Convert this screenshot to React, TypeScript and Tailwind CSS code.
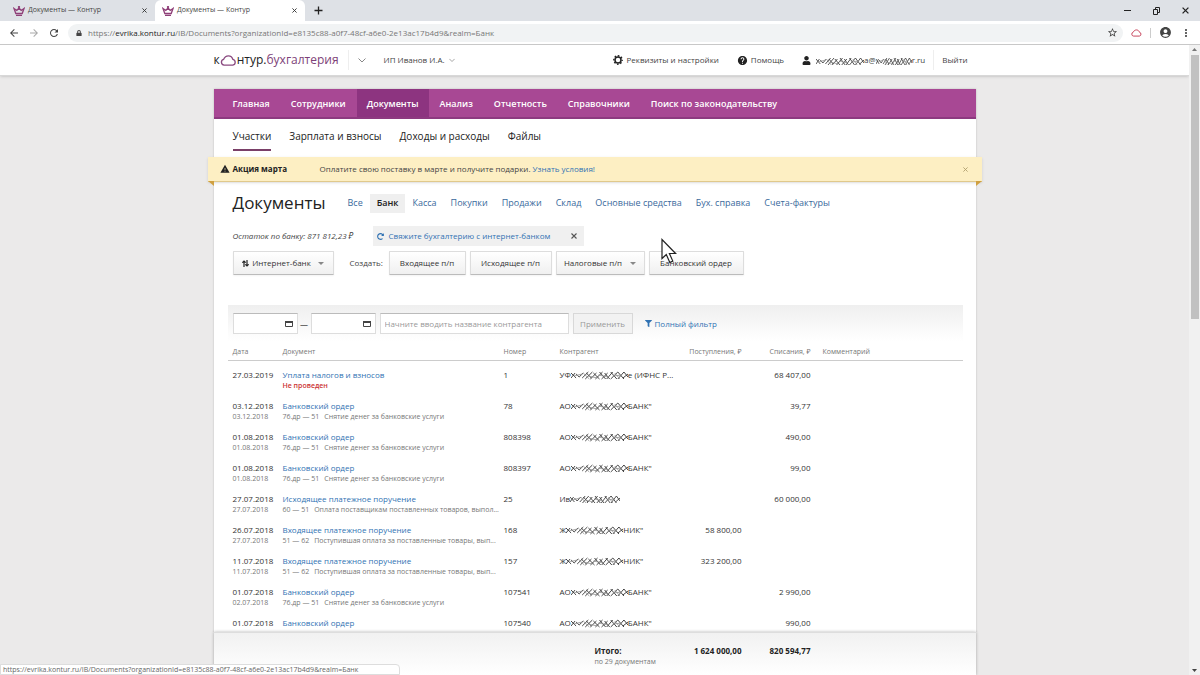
import type { ReactNode } from "react";
import { FaFilter, FaLock, FaRedoAlt, FaUser } from "react-icons/fa";
import {
  MdAccountCircle,
  MdArrowBack,
  MdArrowForward,
  MdHelp,
  MdMoreVert,
  MdRefresh,
  MdStarBorder,
  MdWarning,
} from "react-icons/md";

const PAGE_URL =
  "/IB/Documents?organizationId=e8135c88-a0f7-48cf-a6e0-2e13ac17b4d9&realm=Банк";

const NAV = [
  "Главная",
  "Сотрудники",
  "Документы",
  "Анализ",
  "Отчетность",
  "Справочники",
  "Поиск по законодательству",
];

const SUBNAV = ["Участки", "Зарплата и взносы", "Доходы и расходы", "Файлы"];

const KINDS = [
  "Все",
  "Банк",
  "Касса",
  "Покупки",
  "Продажи",
  "Склад",
  "Основные средства",
  "Бух. справка",
  "Счета-фактуры",
];

type Party = { start: string; end: string; hidden: number };

type Doc = {
  date: string;
  posted?: string;
  title: string;
  accounts?: string;
  note?: string;
  warning?: string;
  number: string;
  party: Party;
  income?: string;
  outcome?: string;
};

const BANK: Party = { start: "АО", end: 'БАНК"', hidden: 57 };
const CLIENT: Party = { start: "Ж", end: 'НИК"', hidden: 57 };
const FEE = { title: "Банковский ордер", accounts: "76.др — 51", note: "Снятие денег за банковские услуги", party: BANK };
const INCOMING = {
  title: "Входящее платежное поручение",
  accounts: "51 — 62",
  note: "Поступившая оплата за поставленные товары, вып...",
  party: CLIENT,
};

const DOCS: Doc[] = [
  {
    date: "27.03.2019",
    title: "Уплата налогов и взносов",
    warning: "Не проведен",
    number: "1",
    party: { start: "УФ", end: "е (ИФНС Р...", hidden: 57 },
    outcome: "68 407,00",
  },
  { ...FEE, date: "03.12.2018", posted: "03.12.2018", number: "78", outcome: "39,77" },
  { ...FEE, date: "01.08.2018", posted: "01.08.2018", number: "808398", outcome: "490,00" },
  { ...FEE, date: "01.08.2018", posted: "01.08.2018", number: "808397", outcome: "99,00" },
  {
    date: "27.07.2018",
    posted: "27.07.2018",
    title: "Исходящее платежное поручение",
    accounts: "60 — 51",
    note: "Оплата поставщикам поставленных товаров, выпол...",
    number: "25",
    party: { start: "Ив", end: "", hidden: 50 },
    outcome: "60 000,00",
  },
  { ...INCOMING, date: "26.07.2018", posted: "27.07.2018", number: "168", income: "58 800,00" },
  { ...INCOMING, date: "11.07.2018", posted: "11.07.2018", number: "157", income: "323 200,00" },
  { ...FEE, date: "01.07.2018", posted: "02.07.2018", number: "107541", outcome: "2 990,00" },
  { date: "01.07.2018", title: "Банковский ордер", party: BANK, number: "107540", outcome: "990,00" },
];

function Scribble({ width }: { width: number }) {
  return (
    <svg width={width} height="11" viewBox="0 -2 56 11" preserveAspectRatio="none" fill="none" stroke="#333" strokeWidth="0.9" className="shrink-0" aria-hidden="true">
      <path d="M0 2l5 5M0 7l4-5M5 3l3 3 4-4M11 7l6-6M14 8l7-7M15 2l5 5M19 8l6-6M22 2l6 6M24 8l7-7M28 1l6 7M30 8l6-6M33 2l5 6M35 8l6-7M39 1l6 7M39 8l7-7M46 1l6 7M46 8l6-7M52 1l4 5M51 7l5-4" />
      <path d="M3 5l8-2M12 2l6 6M17 5l9 2M27 4l10 2M41 5l9-1M43 2l5 6" stroke="#999" />
    </svg>
  );
}

function Crown() {
  return (
    <svg width="12" height="10" viewBox="0 0 12 10" fill="none" stroke="#8f3f78" strokeWidth="1.3" aria-hidden="true">
      <path d="M1 2.500l1.800 5h6.400l1.800-5-2.800 2L6 2 3.800 4.500zM3 9.300h6" />
      <circle cx="6" cy="1" r="0.5" />
    </svg>
  );
}

function Cloud({ width, height, color }: { width: number; height: number; color: string }) {
  return (
    <svg width={width} height={height} viewBox="0 0 15 10" fill="none" stroke={color} strokeWidth="1.2" aria-hidden="true">
      <path d="M3.500 9.200a2.700 2.700 0 0 1-.4-5.300C4 1.700 5.700.8 7.400.8c2 0 3.500 1.200 4 3.100a2.700 2.700 0 0 1 0 5.300z" />
    </svg>
  );
}

function Gear() {
  return (
    <svg width="10" height="10" viewBox="0 0 10 10" fill="none" stroke="#222" aria-hidden="true">
      <circle cx="5" cy="5" r="3" strokeWidth="1.500" />
      <circle cx="5" cy="5" r="4.200" strokeWidth="1.400" strokeDasharray="1.650 1.650" strokeDashoffset="0.800" />
    </svg>
  );
}

function Chevron({ size = 7 }: { size?: number }) {
  return (
    <svg width={size} height={size} viewBox="0 0 8 8" fill="none" stroke="#888" aria-hidden="true">
      <path d="M.5 2.500L4 6l3.500-3.500" />
    </svg>
  );
}

function Caret() {
  return (
    <svg width="6" height="3" viewBox="0 0 6 3" fill="#888" aria-hidden="true">
      <path d="M0 0h6L3 3z" />
    </svg>
  );
}

function Cross({ size, color }: { size: number; color: string }) {
  return (
    <svg width={size} height={size} viewBox="0 0 6 6" stroke={color} strokeWidth="1.1" aria-hidden="true">
      <path d="M.5.5l5 5M5.500.5l-5 5" />
    </svg>
  );
}

function Calendar() {
  return (
    <svg width="8" height="7" viewBox="0 0 8 7" fill="none" stroke="#444" aria-hidden="true">
      <path d="M.5 1.500h7v5h-7z" />
      <path d="M0 2h8" strokeWidth="2" />
    </svg>
  );
}

function BrowserTab({ active = false }: { active?: boolean }) {
  return (
    <div className={`flex h-full w-[150px] items-center pr-2 ${active ? "rounded-t-md bg-white pl-[7px]" : "pl-2"}`}>
      <Crown />
      <span className="ml-[3px] flex-1 text-[7px] text-[#444]">Документы — Контур</span>
      <button aria-label="Закрыть вкладку">
        <Cross size={5} color="#333" />
      </button>
    </div>
  );
}

function BrowserChrome() {
  return (
    <div className="shrink-0">
      <div className="flex h-[21px] items-center bg-[#dee1e6] pl-[5px]">
        <BrowserTab />
        <BrowserTab active />
        <button aria-label="Новая вкладка" className="ml-[9px]">
          <svg width="9" height="9" viewBox="0 0 9 9" stroke="#222" strokeWidth="1.300">
            <path d="M4.500.5v8M.5 4.500h8" />
          </svg>
        </button>
        <div className="mr-[11px] ml-auto flex items-center gap-[22px]">
          <button aria-label="Свернуть">
            <svg width="7" height="7" viewBox="0 0 7 7" stroke="#222"><path d="M0 3.500h7" /></svg>
          </button>
          <button aria-label="Развернуть">
            <svg width="7" height="8" viewBox="0 0 7 8" fill="none" stroke="#222"><path d="M.5 2.500h4v5h-4zM2.500 2.500v-2h4v5h-2" /></svg>
          </button>
          <button aria-label="Закрыть">
            <Cross size={7} color="#222" />
          </button>
        </div>
      </div>
      <div className="flex h-6 items-center border-b border-[#c8c8c8] bg-white px-2 text-[#444]">
        <button aria-label="Назад"><MdArrowBack size={12} /></button>
        <button aria-label="Вперед" className="ml-2 text-[#aaa]"><MdArrowForward size={12} /></button>
        <button aria-label="Обновить" className="ml-2"><MdRefresh size={12} /></button>
        <div className="mr-2 ml-2 flex h-[18px] flex-1 items-center rounded-full bg-[#f1f3f4] pr-[5px] pl-2">
          <FaLock size={6} />
          <span className="ml-[6px] flex-1 text-[8px] text-[#777]">
            https://<span className="text-[#222]">evrika.kontur.ru</span>
            {PAGE_URL}
          </span>
          <MdStarBorder size={11} />
        </div>
        <Cloud width={11} height={8} color="#c0304a" />
        <span className="mx-2 h-[10px] w-px bg-[#ccc]" />
        <MdAccountCircle size={13} />
        <MdMoreVert size={12} className="ml-2" />
      </div>
    </div>
  );
}

function SiteHeader() {
  return (
    <header className="border-b border-[#d8d8d8] bg-white shadow-sm">
      <div className="mx-auto flex h-[30px] max-w-[762px] items-center text-[8px] text-[#444]">
        <a href="#" className="flex items-center text-[12px] text-[#222]">
          к
          <Cloud width={17} height={11} color="#8a4a80" />
          нтур.<span className="text-[#7d3f78]">бухгалтерия</span>
        </a>
        <span className="ml-[9px] h-5 w-px bg-[#eee]" />
        <button aria-label="Сервисы" className="ml-[9px]"><Chevron size={8} /></button>
        <button className="ml-[18px] flex items-center gap-1">
          ИП Иванов И.А. <Chevron size={6} />
        </button>
        <a href="#" className="ml-auto flex items-center gap-1">
          <Gear /> Реквизиты и настройки
        </a>
        <a href="#" className="ml-[18px] flex items-center gap-[3px]">
          <MdHelp size={11} className="text-[#222]" /> Помощь
        </a>
        <a href="#" className="ml-[18px] flex items-center">
          <FaUser size={9} className="mr-[5px] text-[#222]" />
          <Scribble width={48} />
          а@
          <Scribble width={36} />
          r.ru
        </a>
        <span className="ml-2 h-5 w-px bg-[#eee]" />
        <a href="#" className="mr-2 ml-2">Выйти</a>
      </div>
    </header>
  );
}

function Promo() {
  return (
    <div className="relative -mx-[6px] flex h-[25px] items-center border-b border-[#e0c98c] bg-[#fdefc3] pr-[14px] pl-3 text-[8px] shadow-sm">
      <MdWarning size={10} className="text-[#222]" />
      <b className="ml-[3px] w-[87px] text-[#222]">Акция марта</b>
      <span className="flex-1 text-[#444]">
        Оплатите свою поставку в марте и получите подарки.{" "}
        <a href="#" className="text-[#3072b3]">Узнать условия!</a>
      </span>
      <button aria-label="Закрыть"><Cross size={5} color="#b0a070" /></button>
      <svg width="6" height="5" viewBox="0 0 6 5" fill="#d0a040" className="absolute top-full left-0"><path d="M0 0h6v5z" /></svg>
      <svg width="6" height="5" viewBox="0 0 6 5" fill="#d0a040" className="absolute top-full right-0"><path d="M0 0h6L0 5z" /></svg>
    </div>
  );
}

function Button({ className, children }: { className: string; children: ReactNode }) {
  return (
    <button
      className={`flex h-6 items-center justify-center rounded-[1px] border border-[#ddd] border-b-[#bbb] bg-linear-to-b from-white to-[#f0f0f0] text-[8px] whitespace-nowrap text-[#333] shadow-xs ${className}`}
    >
      {children}
    </button>
  );
}

function DateField({ label }: { label: string }) {
  return (
    <label className="flex h-[21px] w-[65px] items-center border border-[#ddd] border-t-[#bbb] bg-white pr-1">
      <input type="text" aria-label={label} className="w-full min-w-0 flex-1 px-1 text-[8px] outline-none" />
      <Calendar />
    </label>
  );
}

function Toolbar() {
  return (
    <div className="pl-[19px]">
      <div className="flex h-[42px] items-center">
        <h1 className="w-[108px] text-[17px] text-[#222]">Документы</h1>
        <nav className="flex text-[9px]">
          {KINDS.map((kind) => (
            <a
              key={kind}
              href="#"
              className={`flex h-[19px] items-center px-[7px] ${kind === "Банк" ? "bg-[#efefef] font-semibold text-[#222]" : "text-[#3a6a9c]"}`}
            >
              {kind}
            </a>
          ))}
        </nav>
      </div>
      <div className="mt-[2px] flex h-5 items-center text-[8px]">
        <i className="w-[140px] text-[#444]">Остаток по банку: 871 812,23 ₽</i>
        <div className="flex h-full w-[211px] items-center bg-[#f0f0f0] pr-[7px] pl-1">
          <a href="#" className="flex flex-1 items-center gap-[5px] text-[#3072b3]">
            <FaRedoAlt size={7} /> Свяжите бухгалтерию с интернет-банком
          </a>
          <button aria-label="Закрыть"><Cross size={6} color="#555" /></button>
        </div>
      </div>
      <div className="mt-[5px] flex items-center">
        <Button className="w-[101px] gap-[3px]">
          <svg width="7" height="7" viewBox="0 0 7 7" fill="none" stroke="#222" strokeWidth="1.200" aria-hidden="true">
            <path d="M2 7V1M.3 2.700L2 1l1.700 1.700M5 0v6M3.300 4.300L5 6l1.700-1.700" />
          </svg>
          Интернет-банк
          <span className="ml-1"><Caret /></span>
        </Button>
        <span className="ml-4 w-[39px] text-[8px] text-[#444]">Создать:</span>
        <div className="flex gap-1">
          <Button className="w-[77px]">Входящее п/п</Button>
          <Button className="w-[82px]">Исходящее п/п</Button>
          <Button className="w-[89px] gap-2">Налоговые п/п <Caret /></Button>
          <Button className="w-[95px]">Банковский ордер</Button>
        </div>
      </div>
    </div>
  );
}

function FilterBar() {
  return (
    <form className="mt-[30px] mr-[13px] ml-[14px] flex h-9 items-start bg-linear-to-b from-[#efefef] to-white pt-2 pl-[5px] text-[8px]">
      <DateField label="Дата с" />
      <span className="w-[13px] pt-[5px] text-center leading-3">—</span>
      <DateField label="Дата по" />
      <input
        type="text"
        aria-label="Контрагент"
        placeholder="Начните вводить название контрагента"
        className="ml-1 h-[21px] w-[189px] border border-[#ddd] border-t-[#bbb] bg-white px-1 placeholder:text-[#999]"
      />
      <button type="button" disabled className="ml-1 h-[21px] w-[60px] border border-[#d8d8d8] bg-[#f2f2f2] text-[#999]">
        Применить
      </button>
      <a href="#" className="ml-3 flex h-[21px] items-center gap-[3px] text-[#3072b3]">
        <FaFilter size={7} /> Полный фильтр
      </a>
    </form>
  );
}

function DocRow({ doc }: { doc: Doc }) {
  return (
    <tr className="align-top">
      <td className="pt-2 pb-px pl-[5px]">
        <div>{doc.date}</div>
        <div className="text-[7px] text-[#777]">{doc.posted}</div>
      </td>
      <td className="pt-2 pb-px whitespace-nowrap">
        <a href="#" className="block text-[#3072b3]">{doc.title}</a>
        {doc.warning && (
          <div className="text-[7px] font-semibold text-[#c33]">{doc.warning}</div>
        )}
        {doc.note && (
          <div className="text-[7px] text-[#777]">
            <span className="mr-[5px]">{doc.accounts}</span>
            {doc.note}
          </div>
        )}
      </td>
      <td className="pt-2 pb-px">{doc.number}</td>
      <td className="pt-2 pb-px">
        <div className="flex items-center whitespace-nowrap">
          {doc.party.start}
          <Scribble width={doc.party.hidden} />
          {doc.party.end}
        </div>
      </td>
      <td className="pt-2 pb-px text-right">{doc.income}</td>
      <td className="pt-2 pb-px text-right">{doc.outcome}</td>
      <td />
    </tr>
  );
}

function DocTable() {
  return (
    <div className="mr-[13px] ml-[14px]">
      <table className="w-full table-fixed text-[8px] leading-[11px] text-[#333]">
        <colgroup>
          <col className="w-[55px]" />
          <col className="w-[221px]" />
          <col className="w-[56px]" />
          <col className="w-[115px]" />
          <col className="w-[67px]" />
          <col className="w-[69px]" />
          <col />
        </colgroup>
        <thead>
          <tr className="h-[19px] border-b border-[#ccc] text-left text-[7px] text-[#777] *:pt-[3px] *:font-normal">
            <th className="pl-[5px]">Дата</th>
            <th>Документ</th>
            <th>Номер</th>
            <th>Контрагент</th>
            <th className="text-right">Поступления, ₽</th>
            <th className="text-right">Списания, ₽</th>
            <th className="pl-3">Комментарий</th>
          </tr>
        </thead>
        <tbody>
          {DOCS.map((doc) => (
            <DocRow key={doc.number} doc={doc} />
          ))}
        </tbody>
      </table>
    </div>
  );
}

function Totals() {
  return (
    <footer className="z-10 mx-auto flex h-[43px] w-full max-w-[762px] shrink-0 border-t border-[#ddd] bg-linear-to-b from-[#f1f1f1] to-white pt-3 text-[8px] leading-[11px] text-[#222] shadow-[0_0_3px_rgba(0,0,0,0.3)]">
      <div className="ml-[381px] w-[67px]">
        <b>Итого:</b>
        <div className="text-[7px] whitespace-nowrap text-[#777]">по 29 документам</div>
      </div>
      <b className="w-20 text-right">1 624 000,00</b>
      <b className="w-[69px] text-right">820 594,77</b>
    </footer>
  );
}

function Scrollbar() {
  return (
    <div className="flex w-[11px] shrink-0 flex-col items-center bg-[#f1f1f1] py-[3px]" aria-hidden="true">
      <svg width="5" height="3" viewBox="0 0 5 3" fill="#777"><path d="M0 3h5L2.500 0z" /></svg>
      <div className="mt-1 h-[264px] w-2 bg-[#c1c1c1]" />
      <svg width="5" height="3" viewBox="0 0 5 3" fill="#444" className="mt-auto"><path d="M0 0h5L2.500 3z" /></svg>
    </div>
  );
}

export default function App() {
  return (
    <div className="relative flex h-screen flex-col overflow-hidden bg-[#ebeaea] font-['Open_Sans','Noto_Sans',sans-serif]">
      <BrowserChrome />
      <div className="flex min-h-0 flex-1">
        <div className="flex min-w-0 flex-1 flex-col">
          <div className="min-h-0 flex-1 overflow-hidden">
            <SiteHeader />
            <main className="mx-auto mt-[13px] max-w-[762px] bg-white pb-3 shadow-[0_0_2px_rgba(0,0,0,0.2)]">
              <nav className="flex h-[30px] gap-px border-b-2 border-[#8d3a80] bg-[#a84894] pl-[9px] text-[9px] font-semibold text-white">
                {NAV.map((item) => (
                  <a key={item} href="#" className={`flex items-center px-[10px] pt-[2px] ${item === "Документы" ? "bg-[#8d3480]" : ""}`}>
                    {item}
                  </a>
                ))}
              </nav>
              <nav className="flex h-[38px] gap-[18px] pt-1 pl-[19px] text-[10px] text-[#222]">
                {SUBNAV.map((item) => (
                  <a key={item} href="#" className={`flex h-7 items-center border-b-2 ${item === "Участки" ? "border-[#7a3f68]" : "border-transparent"}`}>
                    {item}
                  </a>
                ))}
              </nav>
              <Promo />
              <Toolbar />
              <FilterBar />
              <DocTable />
            </main>
          </div>
          <Totals />
        </div>
        <Scrollbar />
      </div>
      <div className="absolute bottom-0 left-0 z-20 h-[11px] w-[400px] rounded-tr-sm border border-[#ddd] bg-white pl-[2px] text-[7px] leading-[10px] whitespace-nowrap text-[#666]">
        https://evrika.kontur.ru{PAGE_URL}
      </div>
      <svg width="16" height="26" viewBox="0 0 16 26" fill="#fff" stroke="#222" strokeWidth="1.200" className="absolute top-[238px] left-[661px] z-20" aria-hidden="true">
        <path d="M1 1.500v19l4.300-4 3.500 8 3-1.400-3.400-7.600h6.200z" />
      </svg>
    </div>
  );
}
